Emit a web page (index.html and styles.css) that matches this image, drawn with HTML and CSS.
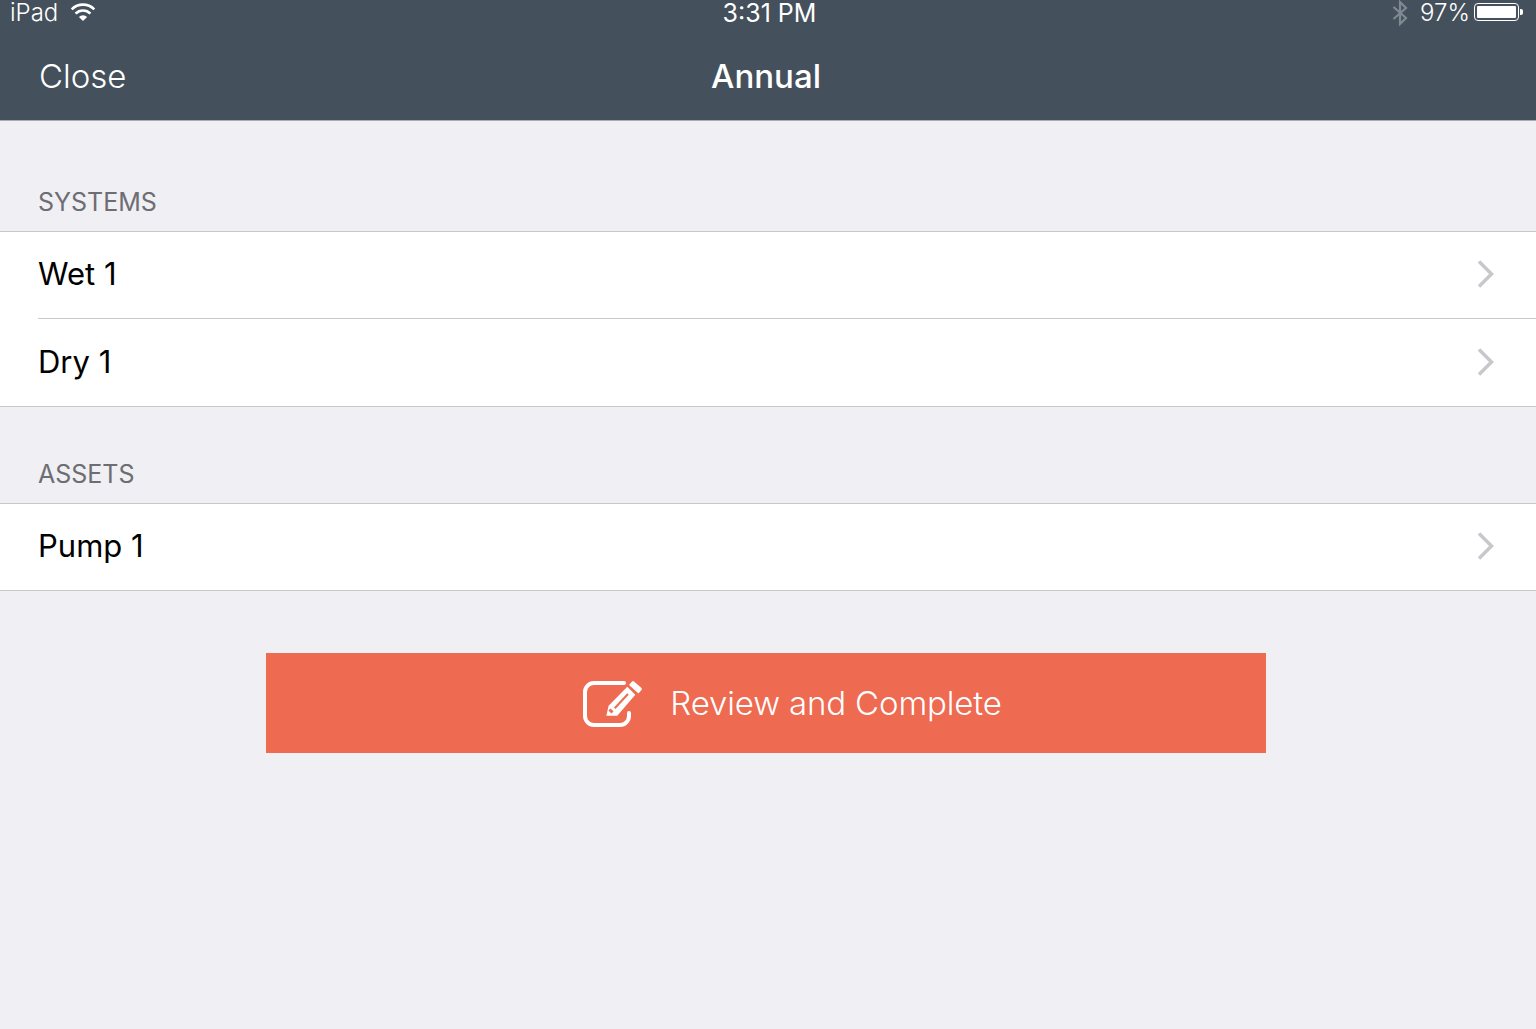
FILE: index.html
```html
<!DOCTYPE html>
<html lang="en">

<head>
    <meta charset="UTF-8">
    <meta name="viewport" content="width=device-width, initial-scale=1.0">
    <title>Annual</title>
    <link rel="stylesheet" href="styles.css">
</head>

<body>
    <header class="topbar">
        <div class="status">
            <div class="status_left">
                <span>iPad</span>
                <svg class="wifi" width="26" height="20" viewBox="0 0 26 20">
                    <path d="M13 19 8.900 14.900a5.800 5.800 0 0 1 8.200 0Z" fill="#fff" />
                    <path d="M5.600 11.600a10.500 10.500 0 0 1 14.800 0M1.700 7.300a16 16 0 0 1 22.600 0" fill="none" stroke="#fff" stroke-width="2.600" />
                </svg>
            </div>
            <span class="status_time">3:31 PM</span>
            <div class="status_right">
                <svg class="bluetooth" width="16" height="26" viewBox="0 0 16 26">
                    <path d="M1.500 7 14 18 8 24V2l6 6L1.500 19" fill="none" stroke="#7f8992" stroke-width="2.200" />
                </svg>
                <span>97%</span>
                <div class="battery"><div class="battery_fill"></div></div>
                <div class="battery_tip"></div>
            </div>
        </div>
        <div class="navbar">
            <a class="nav_close">Close</a>
            <h1>Annual</h1>
        </div>
    </header>

    <main>
        <h2>SYSTEMS</h2>
        <ul class="list">
            <li>
                <div class="row"><span>Wet 1</span>
                    <svg class="chevron" width="18" height="28" viewBox="0 0 18 28"><path d="M2 1.500 14.500 14 2 26.500" /></svg>
                </div>
            </li>
            <li>
                <div class="row"><span>Dry 1</span>
                    <svg class="chevron" width="18" height="28" viewBox="0 0 18 28"><path d="M2 1.500 14.500 14 2 26.500" /></svg>
                </div>
            </li>
        </ul>

        <h2 class="assets">ASSETS</h2>
        <ul class="list">
            <li>
                <div class="row"><span>Pump 1</span>
                    <svg class="chevron" width="18" height="28" viewBox="0 0 18 28"><path d="M2 1.500 14.500 14 2 26.500" /></svg>
                </div>
            </li>
        </ul>

        <button class="complete">
            <svg width="62" height="50" viewBox="0 0 62 50">
                <path d="M41 5H11a9 9 0 0 0-9 9v24a9 9 0 0 0 9 9h26a9 9 0 0 0 9-9v-3" fill="none" stroke="#fff" stroke-width="4" stroke-linecap="round" />
                <path d="M49 3.500a1.500 1.500 0 0 1 2 0l7.500 6.500a1.500 1.500 0 0 1 0 2l-3 3.500-9.500-8.500ZM44.300 8.700l8 8-18 21H23.300l2.300-10Z" fill="#fff" />
                <path d="M45 16 31.700 30.300" stroke="#ee6a51" stroke-width="2" />
                <path d="M26.500 31.500l3 3" stroke="#ee6a51" stroke-width="3" />
            </svg>
            <span>Review and Complete</span>
        </button>
    </main>
</body></html>
```

FILE: styles.css
```css
* {
    box-sizing: border-box;
}

body {
    margin: 0;
    min-height: 1029px;
    background-color: #efeff4;
    font-family: 'Inter', 'Roboto', sans-serif;
    color: #000;
}

.topbar {
    height: 121px;
    background-color: #44505b;
    border-bottom: 1px solid #a9adb2;
    color: #fff;
}

.status {
    display: grid;
    grid-template-columns: 1fr auto 1fr;
    align-items: center;
    height: 26px;
    font-size: 24px;
    line-height: 26px;
    font-weight: 300;
}

.status_left {
    display: flex;
    align-items: center;
    gap: 12px;
    height: 26px;
    padding-left: 10px;
}

.wifi {
    margin-bottom: 2px;
}

.status_time {
    padding-left: 3px;
    font-size: 25px;
    font-weight: 400;
}

.status_right {
    display: flex;
    align-items: center;
    justify-content: flex-end;
    height: 26px;
    padding-right: 13px;
}

.bluetooth {
    margin: 0 12px 0 0;
}

.battery {
    width: 45px;
    height: 18px;
    margin: 0 0 2px 4px;
    padding: 2px;
    border: 1px solid #fff;
    border-radius: 4px;
}

.battery_fill {
    height: 100%;
    background-color: #fff;
    border-radius: 1px;
}

.battery_tip {
    width: 3px;
    height: 6px;
    margin: 0 0 2px 1px;
    background-color: #fff;
    border-radius: 0 2px 2px 0;
}

.navbar {
    display: flex;
    align-items: center;
    justify-content: center;
    position: relative;
    height: 94px;
    padding: 6px 4px 0 0;
}

.nav_close {
    position: absolute;
    left: 39px;
    font-size: 33px;
    font-weight: 300;
}

.navbar h1 {
    margin: 0;
    font-size: 33px;
    font-weight: 500;
}

h2 {
    margin: 0;
    padding: 66px 0 13px 38px;
    font-size: 25px;
    line-height: 31px;
    font-weight: 400;
    color: #6d6d72;
}

h2.assets {
    padding-top: 52px;
}

.list {
    margin: 0;
    padding: 0;
    list-style: none;
    background-color: #fff;
    border-top: 1px solid #c8c7cc;
    border-bottom: 1px solid #c8c7cc;
}

.list li {
    padding-left: 38px;
}

.row {
    display: flex;
    align-items: center;
    justify-content: space-between;
    height: 86px;
    padding: 0 41px 2px 0;
    font-size: 31px;
    font-weight: 400;
}

.row span {
    margin-bottom: 1px;
}

.list li + li .row {
    border-top: 1px solid #c8c7cc;
    height: 88px;
}

.chevron {
    fill: none;
    stroke: #c7c7cc;
    stroke-width: 3.5;
}

.complete {
    display: flex;
    align-items: center;
    justify-content: center;
    gap: 25px;
    width: 1000px;
    height: 100px;
    margin: 62px 0 0 266px;
    padding: 0 0 0 53px;
    background-color: #ee6a51;
    border: 0;
    color: #fff;
    font-family: inherit;
    font-size: 33px;
    letter-spacing: -0.15px;
    font-weight: 300;
}
```
